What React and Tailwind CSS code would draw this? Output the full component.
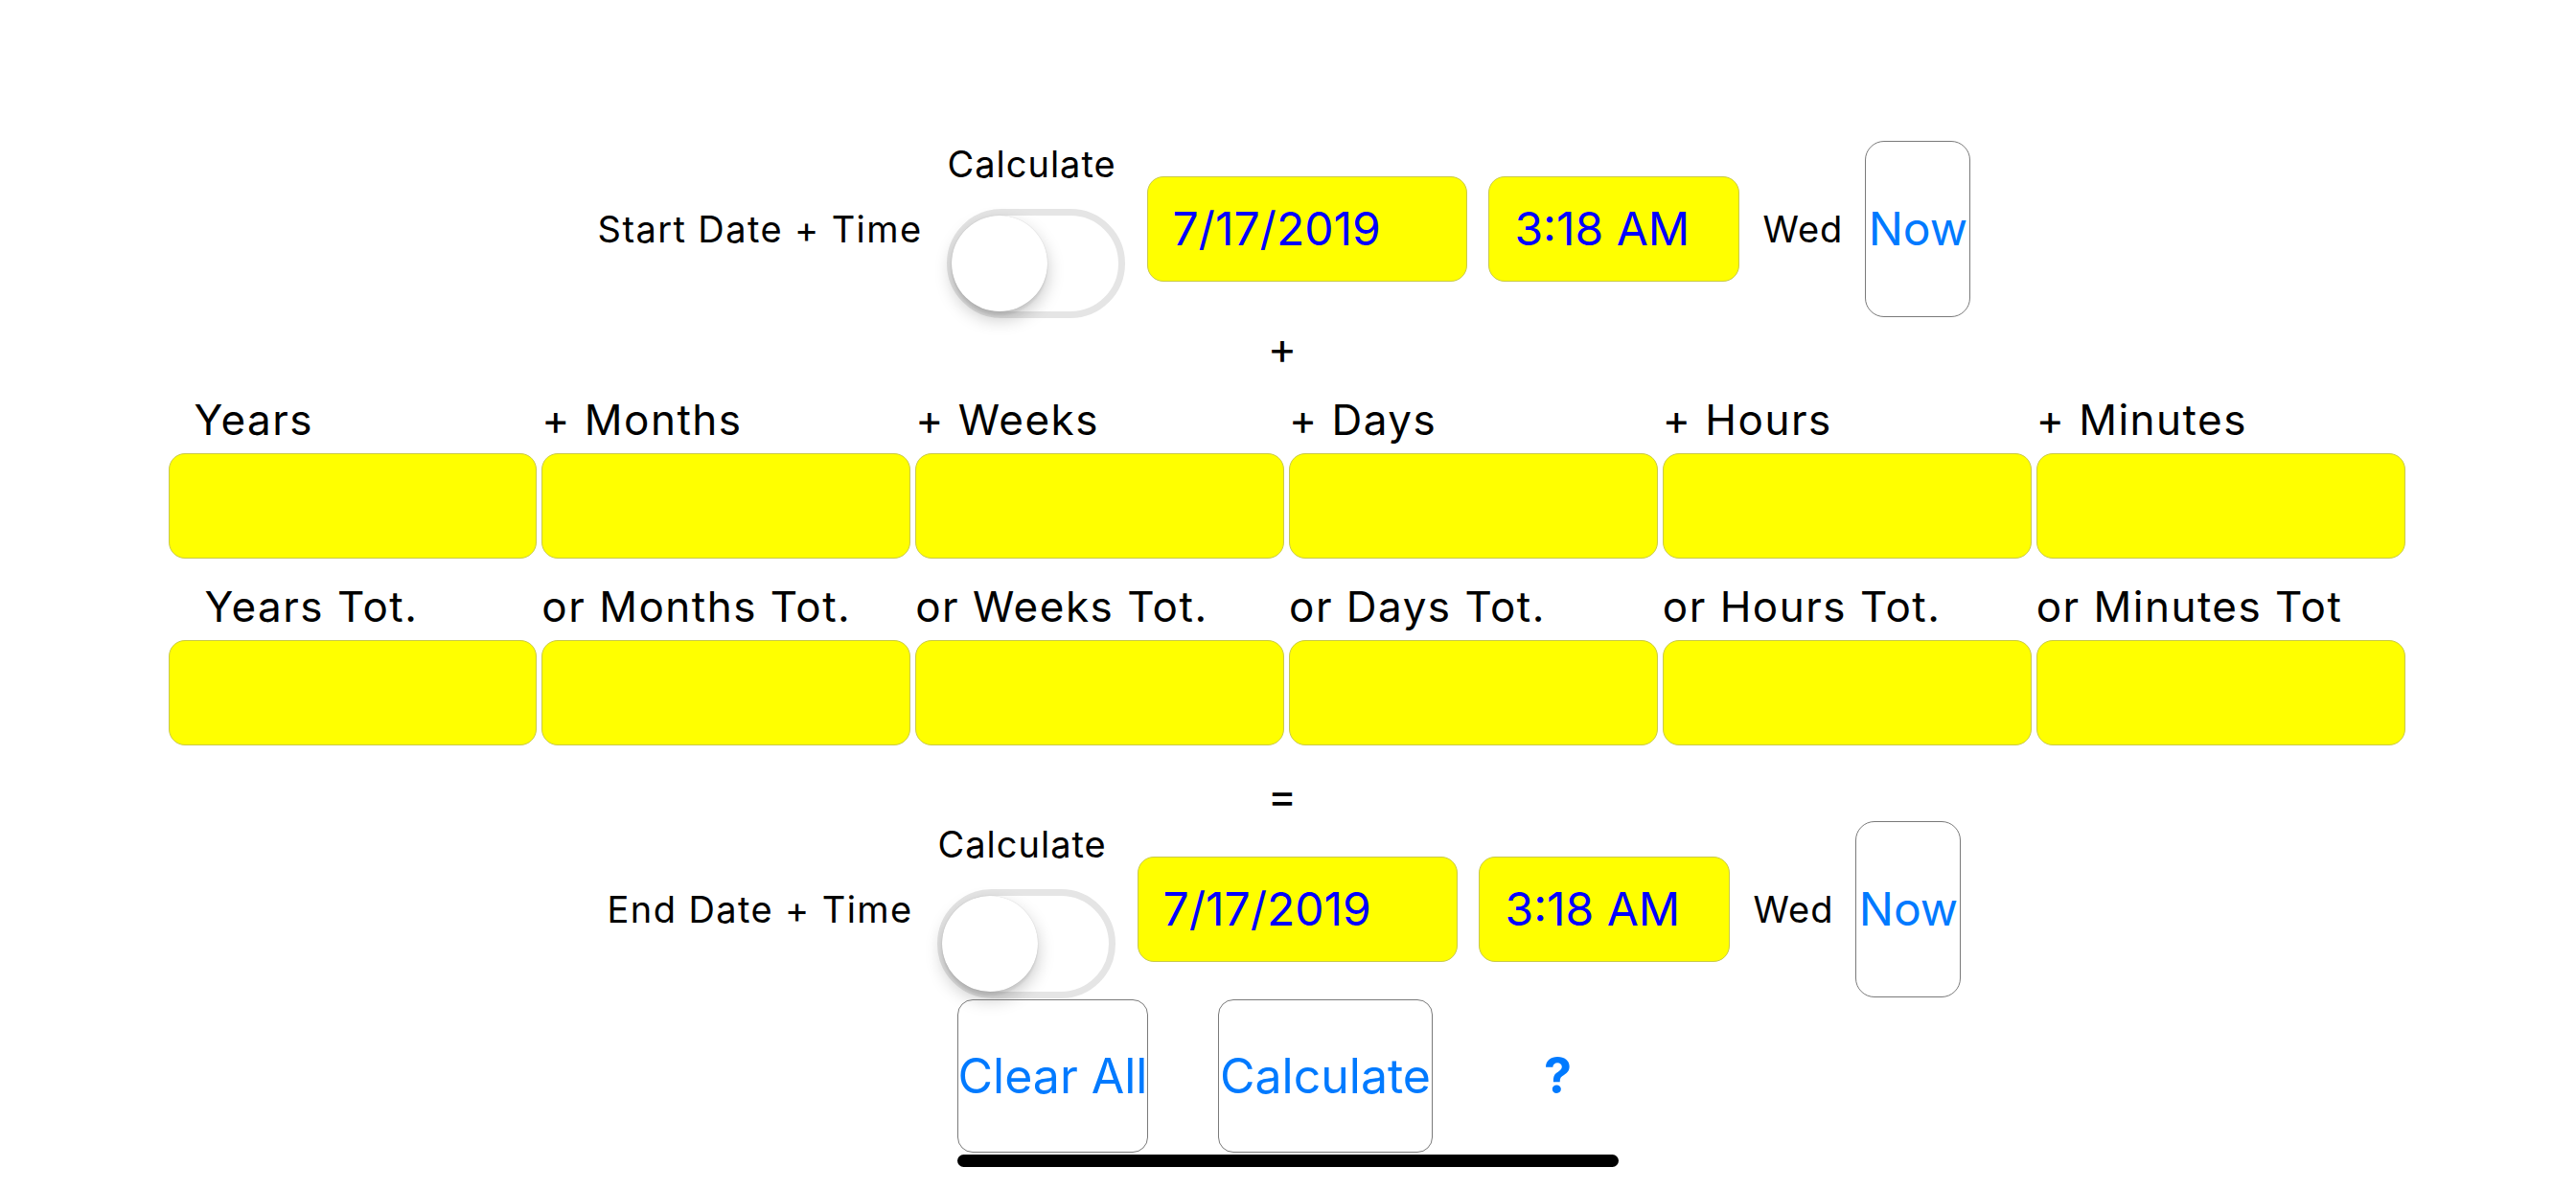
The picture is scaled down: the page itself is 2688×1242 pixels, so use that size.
import React from "react";

function Toggle() {
  return (
    <div className="w-[186px] h-[114px] rounded-full border-[7px] border-[#e5e5e5] bg-white flex items-center">
      <div className="-ml-[2px] w-[100px] h-[100px] rounded-full bg-white shadow-[0_8px_18px_rgba(0,0,0,0.22),0_4px_2px_rgba(0,0,0,0.06),0_0_1px_rgba(0,0,0,0.2)]" />
    </div>
  );
}

function DateRow({ label }) {
  return (
    <div className="flex items-center h-[186px] -ml-[8px]">
      <div className="text-[38px] leading-[46px] tracking-[1.4px] whitespace-nowrap">{label}</div>
      <div className="ml-[26px] w-[186px] flex flex-col">
        <div className="mt-[2px] text-[38px] leading-[46px] tracking-[1px] whitespace-nowrap">Calculate</div>
        <div className="mt-[24px]">
          <Toggle />
        </div>
      </div>
      <div className="ml-[23px] w-[334px] h-[110px] bg-[#ffff00] rounded-[17px] border border-[#c9c94a] flex items-center pl-[25px] text-[48px] text-[#0000ff] whitespace-nowrap">
        7/17/2019
      </div>
      <div className="ml-[22px] w-[262px] h-[110px] bg-[#ffff00] rounded-[17px] border border-[#c9c94a] flex items-center pl-[26px] text-[48px] text-[#0000ff] whitespace-nowrap">
        3:18 AM
      </div>
      <div className="ml-[24px] text-[38px] leading-[46px] tracking-[1px]">Wed</div>
      <div className="ml-[23px] w-[110px] h-[184px] rounded-[20px] border border-[#7a7a7a] flex items-center justify-center text-[48px] text-[#007aff]">
        Now
      </div>
    </div>
  );
}

const row1 = [
  { t: "Years", pl: "pl-[27px]" },
  { t: "+ Months", pl: "pl-[0px]" },
  { t: "+ Weeks", pl: "pl-[0px]" },
  { t: "+ Days", pl: "pl-[0px]" },
  { t: "+ Hours", pl: "pl-[0px]" },
  { t: "+ Minutes", pl: "pl-[0px]" },
];
const row2 = [
  { t: "Years Tot.", pl: "pl-[38px]" },
  { t: "or Months Tot.", pl: "pl-[0px]" },
  { t: "or Weeks Tot.", pl: "pl-[0px]" },
  { t: "or Days Tot.", pl: "pl-[0px]" },
  { t: "or Hours Tot.", pl: "pl-[0px]" },
  { t: "or Minutes Tot", pl: "pl-[0px]" },
];

function LabelRow({ items, className }) {
  return (
    <div className={"grid grid-cols-6 gap-x-[5px] " + className}>
      {items.map((it) => (
        <div key={it.t} className={"h-[53px] text-[44px] leading-[53px] tracking-[1.5px] whitespace-nowrap " + it.pl}>
          {it.t}
        </div>
      ))}
    </div>
  );
}

function FieldRow() {
  return (
    <div className="grid grid-cols-6 gap-x-[5px] mt-[8px]">
      {[0, 1, 2, 3, 4, 5].map((i) => (
        <div key={i} className="h-[110px] bg-[#ffff00] rounded-[17px] border border-[#c9c94a]" />
      ))}
    </div>
  );
}

export default function App() {
  return (
    <div className="w-[2688px] h-[1242px] overflow-hidden bg-white text-black [font-family:Inter,sans-serif] flex flex-col items-center pt-[146px]">
      <DateRow label="Start Date + Time" />
      <div className="mt-[8px] h-[46px] text-[46px] leading-[46px] -ml-[12px]">+</div>
      <div className="mt-[26px] w-[2334px] -ml-[3px]">
        <LabelRow items={row1} />
        <FieldRow />
        <LabelRow items={row2} className="mt-[24px]" />
        <FieldRow />
      </div>
      <div className="mt-[29px] h-[46px] text-[46px] leading-[46px] -ml-[12px]">=</div>
      <div className="mt-[3px]">
        <DateRow label="End Date + Time" />
      </div>
      <div className="mt-[1px] w-[690px] flex items-start">
        <button className="w-[199px] h-[160px] rounded-[16px] border border-[#7a7a7a] flex items-center justify-center text-[50px] text-[#007aff] whitespace-nowrap">
          Clear All
        </button>
        <button className="ml-[73px] w-[224px] h-[160px] rounded-[16px] border border-[#7a7a7a] flex items-center justify-center text-[50px] text-[#007aff] whitespace-nowrap">
          Calculate
        </button>
        <button className="ml-[116px] h-[160px] flex items-center text-[52px] font-bold text-[#007aff]">
          ?
        </button>
      </div>
      <div className="mt-[2px] w-[690px] h-[13px] rounded-full bg-black" />
    </div>
  );
}
